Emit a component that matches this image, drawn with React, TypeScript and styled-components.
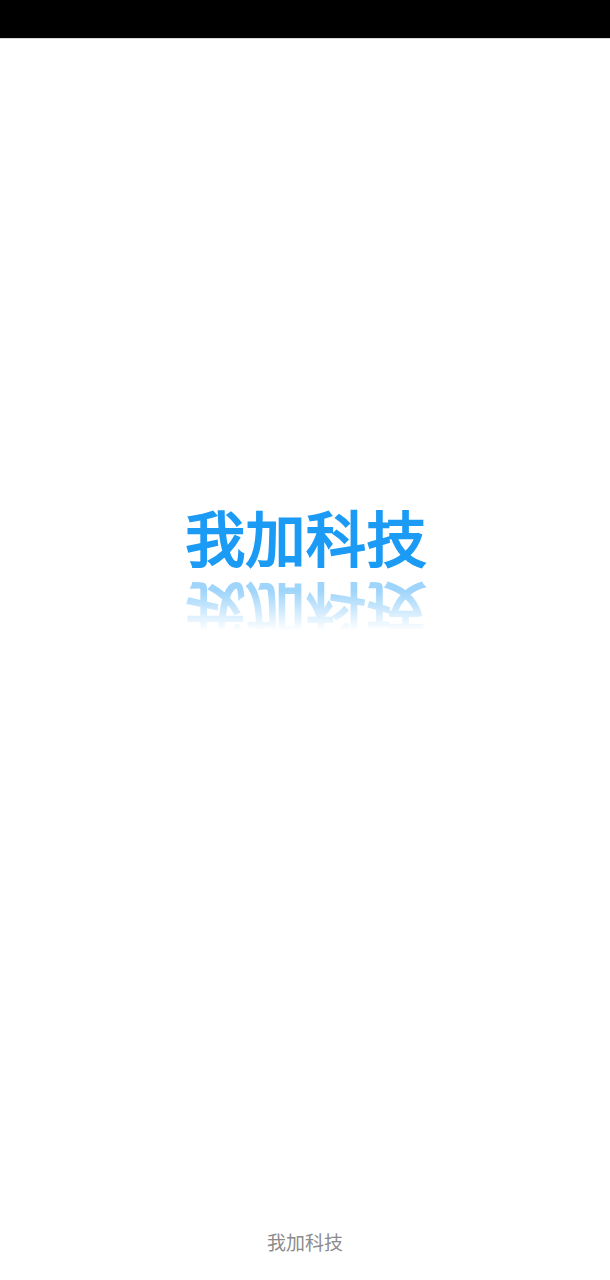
import React from 'react';
import styled, { createGlobalStyle } from 'styled-components';

const GlobalStyle = createGlobalStyle`
  html, body {
    margin: 0;
    padding: 0;
    background: #fff;
  }
`;

const Screen = styled.div`
  display: flex;
  flex-direction: column;
  width: 610px;
  height: 1280px;
  overflow: hidden;
  background: #fff;
  font-family: "Noto Sans CJK SC", "Noto Sans", sans-serif;
`;

const StatusBar = styled.div`
  flex: none;
  height: 39px;
  background: #000;
  border-bottom: 1px solid #d8d8d8;
  box-sizing: border-box;
`;

const Splash = styled.div`
  flex: none;
  display: flex;
  flex-direction: column;
  align-items: center;
  padding: 459px 0 0 2px;
  height: 707px;
`;

const Logo = styled.div`
  font-size: 60px;
  letter-spacing: 0.4px;
  line-height: 76px;
  height: 76px;
  font-weight: 400;
  -webkit-text-stroke: 2.2px #1c9bf5;
  color: #1c9bf5;
  white-space: nowrap;
`;

const Reflection = styled(Logo)`
  margin-top: 2px;
  transform: scaleY(-1);
  -webkit-mask-image: linear-gradient(to top, rgba(0, 0, 0, 0.42) 20%, rgba(0, 0, 0, 0) 72%);
  mask-image: linear-gradient(to top, rgba(0, 0, 0, 0.42) 20%, rgba(0, 0, 0, 0) 72%);
`;

const Footer = styled.div`
  flex: 1;
  display: flex;
  justify-content: center;
  padding-top: 23px;
  font-size: 19px;
  line-height: 28px;
  color: #8c8c8c;
`;

export default function App() {
  return (
    <Screen>
      <GlobalStyle />
      <StatusBar />
      <Splash>
        <Logo>我加科技</Logo>
        <Reflection aria-hidden>我加科技</Reflection>
      </Splash>
      <Footer>我加科技</Footer>
    </Screen>
  );
}
